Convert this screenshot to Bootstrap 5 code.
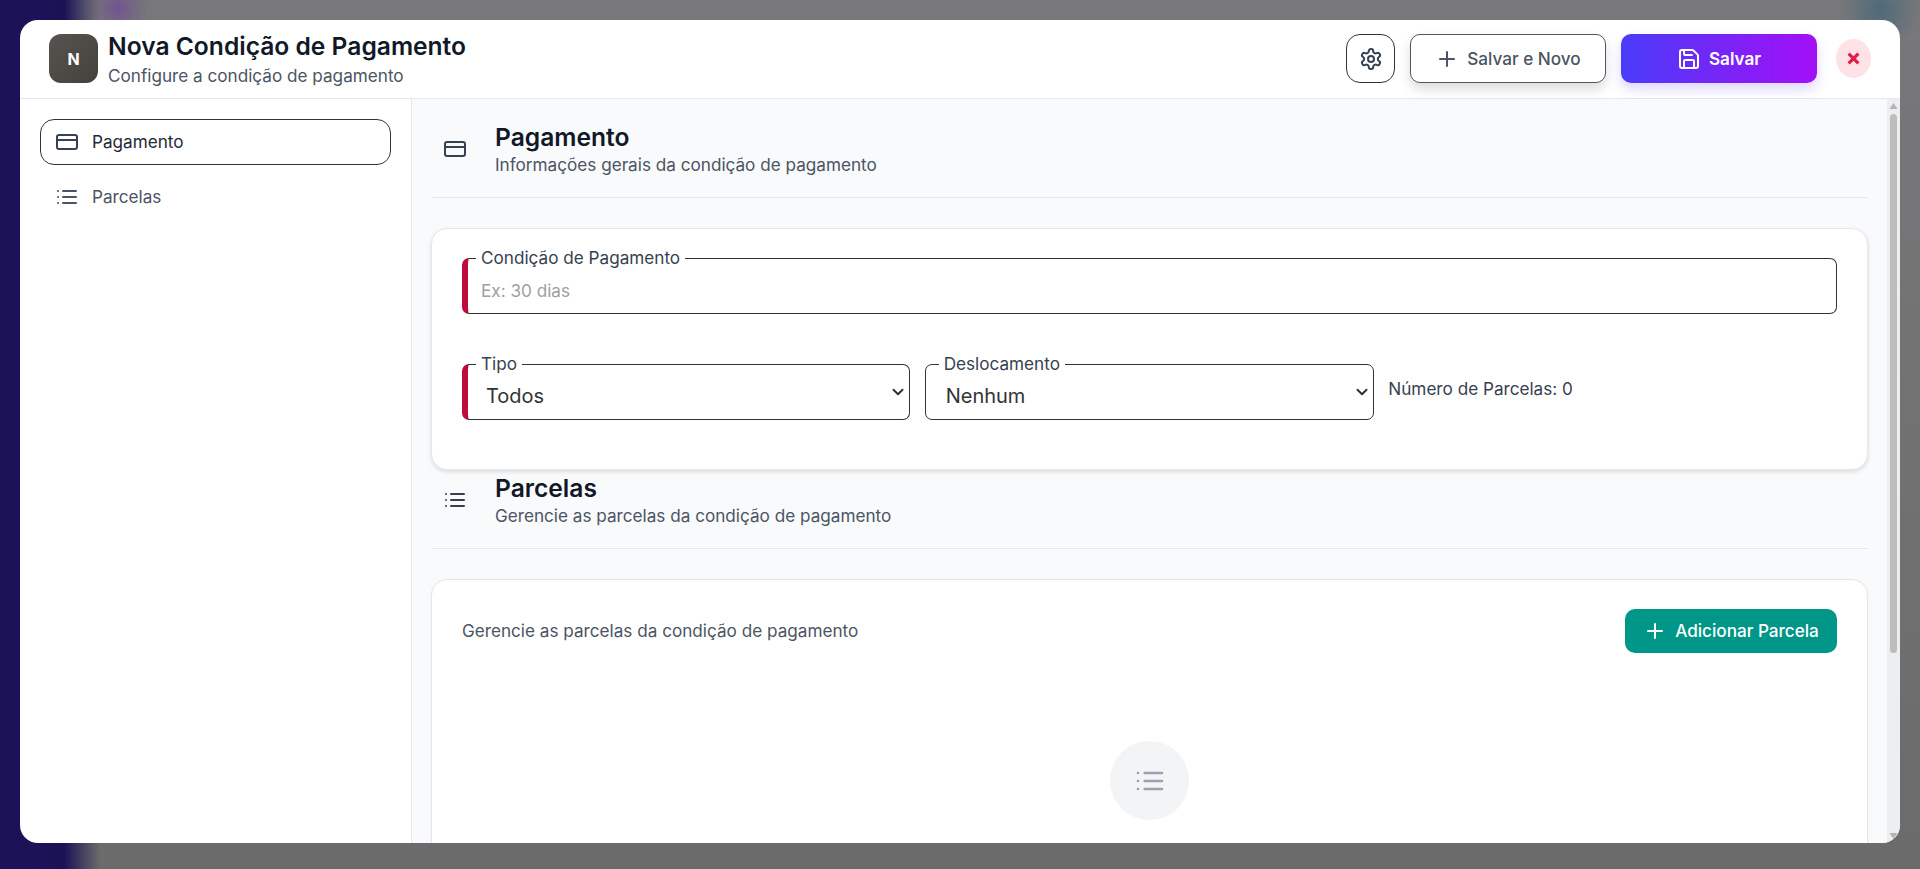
<!DOCTYPE html>
<html lang="pt-BR">
<head>
    <meta charset="UTF-8">
    <meta name="viewport" content="width=device-width, initial-scale=1.0">
    <title>Nova Condição de Pagamento</title>
    <link href="https://cdn.jsdelivr.net/npm/bootstrap@5.3.0/dist/css/bootstrap.min.css" rel="stylesheet">
    <style>
        html, body {
            height: 100%;
            overflow: hidden;
        }

        body {
            font-family: Inter, "Liberation Sans", sans-serif;
            padding: 20px 20px 26px;
            background:
                radial-gradient(ellipse 30px 30px at 118px 8px, rgba(110, 70, 150, .7), transparent),
                radial-gradient(ellipse 40px 40px at 1880px 10px, rgba(60, 100, 120, .7), transparent),
                linear-gradient(90deg, #1b1258 0, #1b1256 64px, rgba(27, 18, 86, 0) 100px),
                linear-gradient(180deg, #78787a 0, #6b6b6b 100%);
        }

        .modal-box {
            height: 100%;
            border-radius: 18px;
            overflow: hidden;
            background: #fff;
        }

        .modal-top {
            height: 79px;
            padding: 0 29px 1px;
            border-bottom: 1px solid #e5e7eb;
        }

        .avatar-box {
            width: 49px;
            height: 49px;
            border-radius: 12px;
            background: linear-gradient(135deg, #57534e, #44403c);
            font-size: 16px;
        }

        .title-block {
            margin-left: 10px;
        }

        .title-block .sub-text {
            margin-top: 2px;
        }

        .modal-title-text {
            font-size: 24.6px;
            line-height: 32px;
            font-weight: 600;
            color: #111827;
        }

        .sub-text {
            font-size: 17.15px;
            line-height: 24px;
            color: #4b5563;
        }

        .gear-btn {
            width: 49px;
            height: 49px;
            border: 1px solid #333;
            border-radius: 14px;
            color: #374151;
            background: #fff;
        }

        .save-new-btn {
            width: 196px;
            height: 49px;
            border: 1px solid #4b5563;
            border-radius: 10px;
            background: #fff;
            color: #4b5563;
            font-size: 17.15px;
            font-weight: 500;
            box-shadow: 0 6px 12px rgba(0, 0, 0, .14);
        }

        .save-btn {
            width: 196px;
            height: 49px;
            border: 0;
            border-radius: 10px;
            background: linear-gradient(90deg, #4a3cf8, #a30ff6);
            color: #fff;
            font-size: 17.15px;
            font-weight: 600;
            box-shadow: 0 6px 12px rgba(90, 50, 240, .2);
        }

        .close-btn {
            width: 35px;
            height: 39px;
            border: 0;
            border-radius: 50%;
            background: #fee2e5;
            color: #e11d48;
            margin-left: 4px;
        }

        .side-col {
            width: 392px;
            padding: 20px;
            border-right: 1px solid #e5e7eb;
        }

        .side-link {
            height: 46px;
            padding: 0 14px;
            margin-bottom: 9px;
            column-gap: 13px;
            border: 1px solid transparent;
            border-radius: 14px;
            font-size: 17.15px;
            color: #4b5563;
            text-decoration: none;
        }

        .side-link.is-active {
            border-color: #333;
            color: #1f2937;
        }

        .side-link.is-active svg {
            color: #374151;
        }

        .main-col {
            background: #f9fafb;
            padding: 22px 19px 0;
            overflow: hidden;
        }

        /* barra de rolagem desenhada, o navegador headless esconde a nativa */
        .scroll-rail {
            width: 13px;
            background: #eceef0;
            color: #b4b4b4;
        }

        .scroll-step {
            display: block;
            flex-shrink: 0;
        }

        .scroll-thumb {
            width: 7px;
            height: 539px;
            border-radius: 4px;
            background: #bdbdbd;
            flex-shrink: 0;
        }

        .section-head {
            padding: 0 0 20px 12px;
            margin-bottom: 30px;
            border-bottom: 1px solid #e5e7eb;
            color: #374151;
        }

        .section-title {
            font-size: 24.6px;
            line-height: 32px;
            font-weight: 600;
            color: #111827;
        }

        .panel-box {
            border: 1px solid #e5e7eb;
            border-radius: 16px;
            background: #fff;
            padding: 30px;
        }

        .panel-first {
            height: 242px;
            margin-bottom: 2px;
            padding-top: 29px;
            box-shadow: 0 2px 4px rgba(0, 0, 0, .12);
        }

        .panel-second {
            height: 401px;
            padding-top: 29px;
            box-shadow: 0 1px 3px rgba(0, 0, 0, .05);
        }

        .field-wrap {
            position: relative;
        }

        .field-wide {
            margin: 0 -1px;
        }

        .field-label {
            position: absolute;
            top: -12px;
            left: 14px;
            padding: 0 5px;
            background: #fff;
            font-size: 17.15px;
            line-height: 24px;
            color: #374151;
            z-index: 1;
        }

        .field-input.form-control,
        .field-input.form-select {
            height: 56px;
            border: 1px solid #333;
            border-radius: 7px;
            font-family: Inter, "Liberation Sans", sans-serif;
            color: #333;
        }

        .field-input.form-control {
            padding: 8px 18px 0 13px;
            font-size: 17.15px;
        }

        .field-input.form-control::placeholder {
            color: #a0a0a0;
        }

        .field-input.form-select {
            padding: 8px 24px 0 20px;
            font-size: 20px;
            background-image: url("data:image/svg+xml,%3csvg xmlns='http://www.w3.org/2000/svg' viewBox='0 0 16 16'%3e%3cpath fill='none' stroke='%23333' stroke-linecap='round' stroke-linejoin='round' stroke-width='2.600' d='m2 5 6 6 6-6'/%3e%3c/svg%3e");
            background-position: right 5px center;
            background-size: 12px 12px;
        }

        .field-required.form-control,
        .field-required.form-select {
            border-left: 6px solid #be0a3c;
        }

        .field-required.form-select {
            padding-left: 18px;
        }

        .gap-row {
            margin-top: 50px;
        }

        .count-text {
            margin-left: -1px;
            padding-top: 13px;
            font-size: 17.15px;
            line-height: 24px;
            color: #374151;
        }

        .add-btn {
            width: 212px;
            height: 44px;
            border: 0;
            border-radius: 10px;
            background: #009688;
            color: #fff;
            font-size: 17.15px;
            font-weight: 500;
        }

        .empty-circle {
            width: 79px;
            height: 79px;
            margin-top: 88px;
            background: #f3f4f6;
            color: #9ca3af;
        }
    </style>
</head>
<body>

    <svg width="0" height="0" class="position-absolute">
        <symbol id="ic-card" viewBox="0 0 24 24"><rect x="2" y="5" width="20" height="14" rx="2"/><path d="M2 10h20"/></symbol>
        <symbol id="ic-list" viewBox="0 0 24 24"><path d="M3 6h.01M3 12h.01M3 18h.01M8 6h13M8 12h13M8 18h13"/></symbol>
        <symbol id="ic-plus" viewBox="0 0 24 24"><path d="M5 12h14M12 5v14"/></symbol>
        <symbol id="ic-save" viewBox="0 0 24 24"><path d="M15.2 3a2 2 0 0 1 1.4.6l3.8 3.8a2 2 0 0 1 .6 1.4V19a2 2 0 0 1-2 2H5a2 2 0 0 1-2-2V5a2 2 0 0 1 2-2z"/><path d="M17 21v-7a1 1 0 0 0-1-1H8a1 1 0 0 0-1 1v7"/><path d="M7 3v4a1 1 0 0 0 1 1h7"/></symbol>
        <symbol id="ic-gear" viewBox="0 0 24 24"><path d="M12.22 2h-.44a2 2 0 0 0-2 2v.18a2 2 0 0 1-1 1.73l-.43.25a2 2 0 0 1-2 0l-.15-.08a2 2 0 0 0-2.73.73l-.22.38a2 2 0 0 0 .73 2.73l.15.1a2 2 0 0 1 1 1.72v.51a2 2 0 0 1-1 1.74l-.15.09a2 2 0 0 0-.73 2.73l.22.38a2 2 0 0 0 2.73.73l.15-.08a2 2 0 0 1 2 0l.43.25a2 2 0 0 1 1 1.73V20a2 2 0 0 0 2 2h.44a2 2 0 0 0 2-2v-.18a2 2 0 0 1 1-1.73l.43-.25a2 2 0 0 1 2 0l.15.08a2 2 0 0 0 2.73-.73l.22-.39a2 2 0 0 0-.73-2.73l-.15-.08a2 2 0 0 1-1-1.74v-.5a2 2 0 0 1 1-1.74l.15-.09a2 2 0 0 0 .73-2.73l-.22-.38a2 2 0 0 0-2.73-.73l-.15.08a2 2 0 0 1-2 0l-.43-.25a2 2 0 0 1-1-1.73V4a2 2 0 0 0-2-2z"/><circle cx="12" cy="12" r="3"/></symbol>
    </svg>

    <div class="modal-box d-flex flex-column">

        <!-- Header -->
        <header class="modal-top d-flex align-items-center flex-shrink-0">
            <div class="avatar-box d-flex align-items-center justify-content-center text-white fw-bold">N</div>
            <div class="title-block flex-grow-1">
                <div class="modal-title-text">Nova Condição de Pagamento</div>
                <div class="sub-text">Configure a condição de pagamento</div>
            </div>
            <div class="d-flex align-items-center" style="gap: 15px">
                <button class="gear-btn d-flex align-items-center justify-content-center p-0" type="button">
                    <svg width="24" height="24" fill="none" stroke="currentColor" stroke-width="2" stroke-linecap="round" stroke-linejoin="round"><use href="#ic-gear"/></svg>
                </button>
                <button class="save-new-btn d-flex align-items-center justify-content-center gap-2" type="button">
                    <svg width="24" height="24" fill="none" stroke="currentColor" stroke-width="2" stroke-linecap="round" stroke-linejoin="round"><use href="#ic-plus"/></svg>
                    Salvar e Novo
                </button>
                <button class="save-btn d-flex align-items-center justify-content-center gap-2" type="button">
                    <svg width="24" height="24" fill="none" stroke="currentColor" stroke-width="2" stroke-linecap="round" stroke-linejoin="round"><use href="#ic-save"/></svg>
                    Salvar
                </button>
                <button class="close-btn d-flex align-items-center justify-content-center p-0" type="button" aria-label="Fechar">
                    <svg width="13" height="13" viewBox="0 0 12 12" fill="none" stroke="currentColor" stroke-width="3"><path d="M1.500 1.500l9 9M10.500 1.500l-9 9"/></svg>
                </button>
            </div>
        </header>

        <div class="d-flex flex-grow-1 overflow-hidden">

            <!-- Sidebar -->
            <nav class="side-col flex-shrink-0">
                <a class="side-link is-active d-flex align-items-center" href="#">
                    <svg width="24" height="24" fill="none" stroke="currentColor" stroke-width="2" stroke-linecap="round" stroke-linejoin="round"><use href="#ic-card"/></svg>
                    Pagamento
                </a>
                <a class="side-link d-flex align-items-center" href="#">
                    <svg width="24" height="24" fill="none" stroke="currentColor" stroke-width="2" stroke-linecap="round" stroke-linejoin="round"><use href="#ic-list"/></svg>
                    Parcelas
                </a>
            </nav>

            <!-- Content -->
            <main class="main-col flex-grow-1">

                <div class="section-head d-flex align-items-center">
                    <svg class="flex-shrink-0" width="24" height="24" fill="none" stroke="currentColor" stroke-width="2" stroke-linecap="round" stroke-linejoin="round"><use href="#ic-card"/></svg>
                    <div style="margin-left: 28px">
                        <div class="section-title">Pagamento</div>
                        <div class="sub-text">Informações gerais da condição de pagamento</div>
                    </div>
                </div>

                <div class="panel-box panel-first">
                    <div class="field-wrap">
                        <label class="field-label">Condição de Pagamento</label>
                        <input class="form-control field-input field-required" type="text" placeholder="Ex: 30 dias">
                    </div>
                    <div class="row g-3 gap-row">
                        <div class="col-4 mt-0">
                            <div class="field-wrap">
                                <label class="field-label">Tipo</label>
                                <select class="form-select field-input field-required"><option>Todos</option></select>
                            </div>
                        </div>
                        <div class="col-4 mt-0">
                            <div class="field-wrap field-wide">
                                <label class="field-label">Deslocamento</label>
                                <select class="form-select field-input"><option>Nenhum</option></select>
                            </div>
                        </div>
                        <div class="col-4 mt-0">
                            <div class="count-text">Número de Parcelas: 0</div>
                        </div>
                    </div>
                </div>

                <div class="section-head d-flex align-items-center">
                    <svg class="flex-shrink-0" width="24" height="24" fill="none" stroke="currentColor" stroke-width="2" stroke-linecap="round" stroke-linejoin="round"><use href="#ic-list"/></svg>
                    <div style="margin-left: 28px">
                        <div class="section-title">Parcelas</div>
                        <div class="sub-text">Gerencie as parcelas da condição de pagamento</div>
                    </div>
                </div>

                <div class="panel-box panel-second">
                    <div class="d-flex align-items-center justify-content-between">
                        <div class="sub-text">Gerencie as parcelas da condição de pagamento</div>
                        <button class="add-btn d-flex align-items-center justify-content-center gap-2" type="button">
                            <svg width="24" height="24" fill="none" stroke="currentColor" stroke-width="2" stroke-linecap="round" stroke-linejoin="round"><use href="#ic-plus"/></svg>
                            Adicionar Parcela
                        </button>
                    </div>
                    <div class="empty-circle rounded-circle d-flex align-items-center justify-content-center mx-auto">
                        <svg width="32" height="32" fill="none" stroke="currentColor" stroke-width="2" stroke-linecap="round" stroke-linejoin="round"><use href="#ic-list"/></svg>
                    </div>
                </div>

            </main>

            <div class="scroll-rail d-flex flex-column align-items-center flex-shrink-0">
                <svg class="scroll-step" width="13" height="15" viewBox="0 0 13 15"><path fill="currentColor" d="M6.500 4l4 6h-8z"/></svg>
                <div class="scroll-thumb"></div>
                <svg class="scroll-step mt-auto" width="13" height="15" viewBox="0 0 13 15"><path fill="currentColor" d="M6.500 11l-4-6h8z"/></svg>
            </div>
        </div>
    </div>

    <script src="https://cdn.jsdelivr.net/npm/bootstrap@5.3.0/dist/js/bootstrap.bundle.min.js"></script>
</body>
</html>
